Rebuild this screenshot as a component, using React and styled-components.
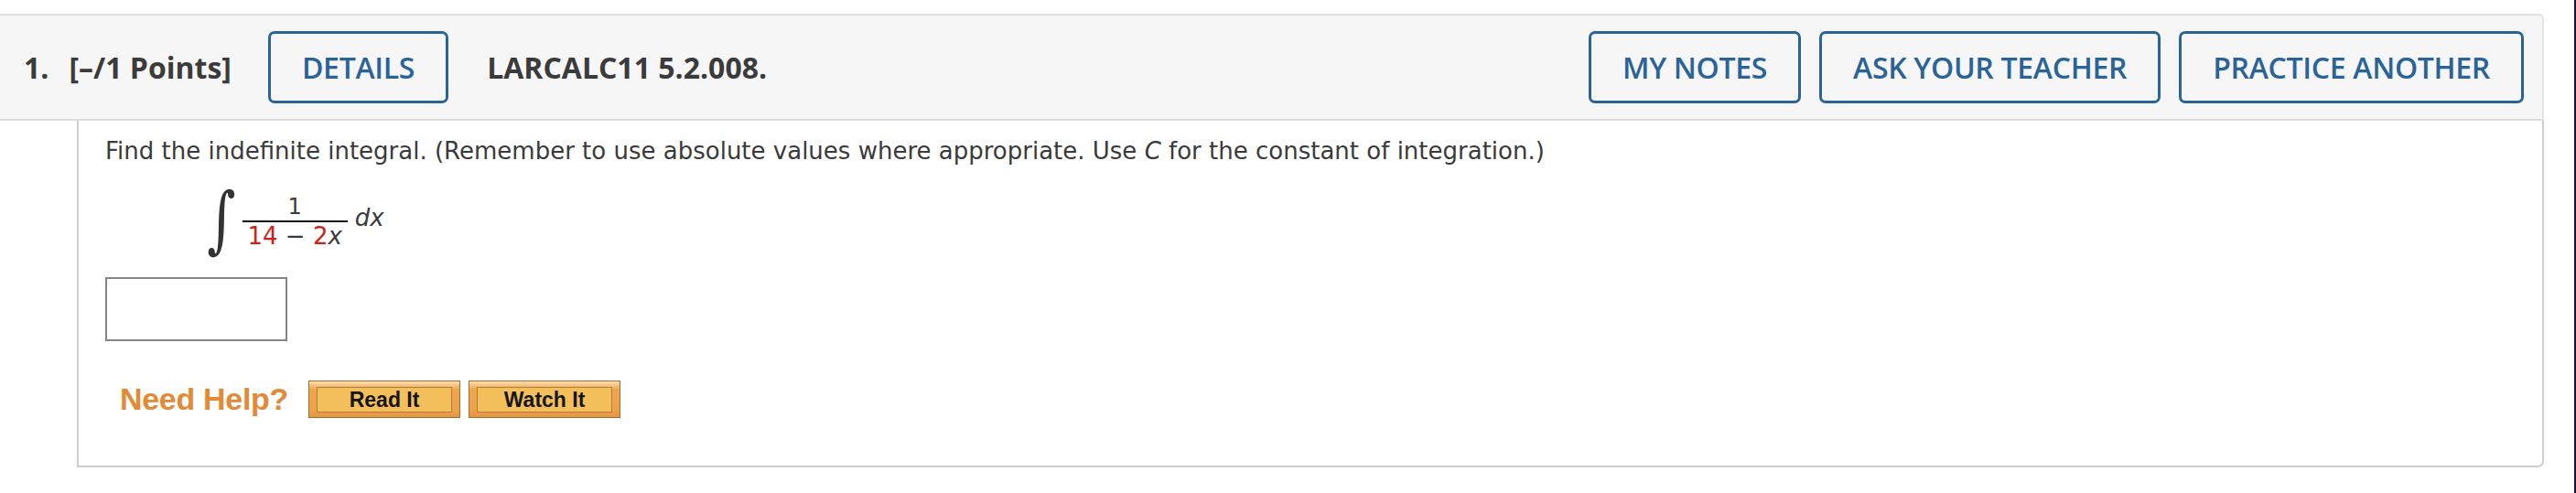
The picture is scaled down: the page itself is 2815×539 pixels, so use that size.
import React from 'react';
import styled, { createGlobalStyle } from 'styled-components';

const GlobalStyle = createGlobalStyle`
    html, body {
        margin: 0;
        padding: 0;
        background: #fff;
    }
    * {
        box-sizing: border-box;
    }
`;

const Page = styled.div`
    width: 2815px;
    height: 539px;
    padding-top: 15px;
    padding-right: 33px;
    border-right: 2px solid #1a0d47;
    background: #fff;
    overflow: hidden;
`;

const QuestionHeader = styled.header`
    display: flex;
    align-items: center;
    height: 117px;
    padding: 0 20px 0 26px;
    background: #f6f6f6;
    border-top: 2px solid #dedede;
    border-right: 2px solid #e4e4e4;
    border-bottom: 2px solid #dcdcdc;
    border-top-right-radius: 6px;
    font-family: "Open Sans", "Noto Sans", sans-serif;
    color: #3b3b3b;
`;

const HeaderLabel = styled.span`
    font-size: 32px;
    font-weight: 700;
    white-space: nowrap;
    margin-left: ${p => p.$gap || 0}px;
`;

const OutlineButton = styled.button`
    height: 79px;
    padding: 0 34px;
    margin-left: ${p => p.$gap || 0}px;
    background: transparent;
    border: 3px solid #2a6398;
    border-radius: 7px;
    color: #2a6398;
    font-family: "Open Sans", "Noto Sans", sans-serif;
    font-size: 32px;
    font-weight: 600;
    letter-spacing: -0.3px;
    white-space: nowrap;
    cursor: pointer;
`;

const Actions = styled.div`
    display: flex;
    gap: 20px;
    margin-left: auto;
`;

const QuestionBody = styled.section`
    display: flex;
    flex-direction: column;
    align-items: flex-start;
    height: 379px;
    margin-left: 84px;
    padding: 18px 0 0 29px;
    border-left: 2px solid #cfcfcf;
    border-right: 2px solid #cfcfcf;
    border-bottom: 2px solid #cfcfcf;
    border-bottom-right-radius: 7px;
    font-family: Verdana, "DejaVu Sans", sans-serif;
    color: #3a3a3a;
`;

const Prompt = styled.p`
    margin: 0;
    height: 30px;
    font-size: 26px;
    line-height: 30px;
    white-space: nowrap;
`;

const Var = styled.i`
    font-style: italic;
`;

const IntegralRow = styled.div`
    display: flex;
    align-items: center;
    height: 80px;
    margin: 20px 0 0 106px;
`;

const IntegralSign = styled.span`
    font-family: "DejaVu Serif", "Liberation Serif", serif;
    font-size: 80px;
    line-height: 80px;
    color: #333;
    transform: scaleX(0.75);
    margin-right: 2px;
`;

const Fraction = styled.span`
    display: inline-flex;
    flex-direction: column;
    align-items: center;
    width: 115px;
    margin-top: 6px;
`;

const Numerator = styled.span`
    font-size: 24px;
    line-height: 26px;
    padding-bottom: 2px;
`;

const FractionBar = styled.span`
    align-self: stretch;
    height: 2px;
    background: #111;
`;

const Denominator = styled.span`
    font-size: 26px;
    line-height: 30px;
    white-space: nowrap;
`;

const Red = styled.span`
    color: #cc2219;
`;

const Differential = styled.span`
    font-size: 26px;
    font-style: italic;
    margin-left: 8px;
    margin-bottom: 4px;
`;

const AnswerBox = styled.input`
    width: 199px;
    height: 70px;
    margin-top: 23px;
    border: 2px solid #858585;
    background: #fff;
    outline: none;
`;

const HelpRow = styled.div`
    display: flex;
    align-items: center;
    height: 41px;
    margin: 43px 0 0 16px;
`;

const HelpLabel = styled.span`
    font-family: "Liberation Sans", Arial, sans-serif;
    font-size: 34px;
    font-weight: 700;
    color: #e28a35;
    letter-spacing: -0.3px;
    margin-right: 22px;
    white-space: nowrap;
`;

const HelpButton = styled.button`
    display: flex;
    width: 166px;
    height: 41px;
    padding: 6px 8px 5px;
    margin-right: 9px;
    border: 1px solid #a66d2f;
    background: linear-gradient(#fbe2b8 0%, #eea64c 22%, #eda24a 80%, #e39640 100%);
    cursor: pointer;
`;

const HelpButtonFace = styled.span`
    flex: 1;
    display: flex;
    align-items: center;
    justify-content: center;
    border: 1px solid #b67b3e;
    background: #f2bf5b;
    font-family: "Liberation Sans", Arial, sans-serif;
    font-size: 23px;
    font-weight: 700;
    color: #151515;
`;

export default function App() {
    return (
        <>
            <GlobalStyle />
            <Page>
                <QuestionHeader>
                    <HeaderLabel>1.</HeaderLabel>
                    <HeaderLabel $gap={22}>[–/1 Points]</HeaderLabel>
                    <OutlineButton $gap={40}>DETAILS</OutlineButton>
                    <HeaderLabel $gap={42}>LARCALC11 5.2.008.</HeaderLabel>
                    <Actions>
                        <OutlineButton>MY NOTES</OutlineButton>
                        <OutlineButton>ASK YOUR TEACHER</OutlineButton>
                        <OutlineButton>PRACTICE ANOTHER</OutlineButton>
                    </Actions>
                </QuestionHeader>
                <QuestionBody>
                    <Prompt>
                        Find the indefinite integral. (Remember to use absolute values where appropriate. Use <Var>C</Var> for the constant of integration.)
                    </Prompt>
                    <IntegralRow>
                        <IntegralSign>∫</IntegralSign>
                        <Fraction>
                            <Numerator>1</Numerator>
                            <FractionBar />
                            <Denominator><Red>14</Red> − <Red>2</Red><Var>x</Var></Denominator>
                        </Fraction>
                        <Differential>dx</Differential>
                    </IntegralRow>
                    <AnswerBox type="text" aria-label="answer" />
                    <HelpRow>
                        <HelpLabel>Need Help?</HelpLabel>
                        <HelpButton><HelpButtonFace>Read It</HelpButtonFace></HelpButton>
                        <HelpButton><HelpButtonFace>Watch It</HelpButtonFace></HelpButton>
                    </HelpRow>
                </QuestionBody>
            </Page>
        </>
    );
}
